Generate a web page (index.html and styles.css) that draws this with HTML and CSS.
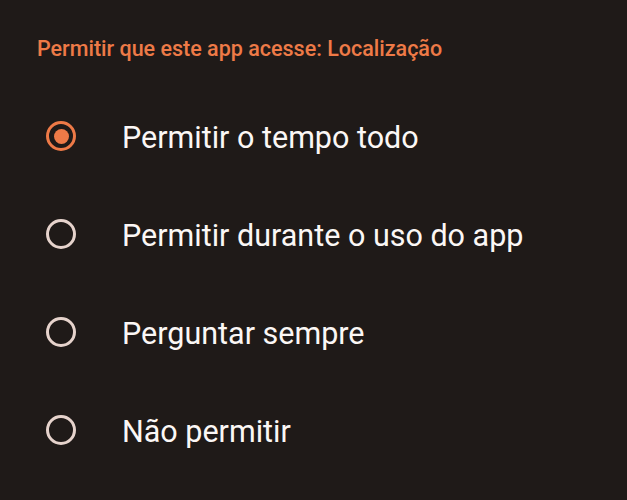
FILE: index.html
```html
<!DOCTYPE html>
<html lang="pt-BR">
<head>
    <meta charset="UTF-8">
    <meta name="viewport" content="width=device-width, initial-scale=1.0">
    <title>Permissão de localização</title>
    <link rel="stylesheet" href="styles.css">
</head>
<body>
    <div class="permission-screen">
        <div class="section-title">Permitir que este app acesse: Localização</div>

        <div class="option-list">
            <div class="option selected">
                <span class="radio"></span>
                <span class="option-label">Permitir o tempo todo</span>
            </div>
            <div class="option">
                <span class="radio"></span>
                <span class="option-label">Permitir durante o uso do app</span>
            </div>
            <div class="option">
                <span class="radio"></span>
                <span class="option-label">Perguntar sempre</span>
            </div>
            <div class="option">
                <span class="radio"></span>
                <span class="option-label">Não permitir</span>
            </div>
        </div>
    </div>
</body>
</html>
```

FILE: styles.css
```css
* {
    margin: 0;
    padding: 0;
    box-sizing: border-box;
}

html, body {
    height: 100%;
}

body {
    background: #1f1a18;
    color: #ffffff;
    font-family: Roboto, "Noto Sans", sans-serif;
    overflow: hidden;
}

.permission-screen {
    padding-top: 35px;
}

.section-title {
    padding-left: 37px;
    font-size: 21.5px;
    line-height: 28px;
    font-weight: 500;
    color: #ee7a47;
}

.option-list {
    margin-top: 24px;
}

.option {
    display: flex;
    align-items: center;
    height: 98px;
    padding-left: 46px;
}

.radio {
    flex: none;
    width: 30px;
    height: 30px;
    border: 3px solid #e6d3cc;
    border-radius: 50%;
    display: flex;
    align-items: center;
    justify-content: center;
}

.option.selected .radio {
    border-color: #ee7a47;
}

.option.selected .radio::after {
    content: "";
    width: 15px;
    height: 15px;
    border-radius: 50%;
    background: #ee7a47;
}

.option-label {
    margin-left: 46px;
    padding-top: 3px;
    font-size: 30.5px;
    line-height: 36px;
    color: #fbf7f5;
}
```
